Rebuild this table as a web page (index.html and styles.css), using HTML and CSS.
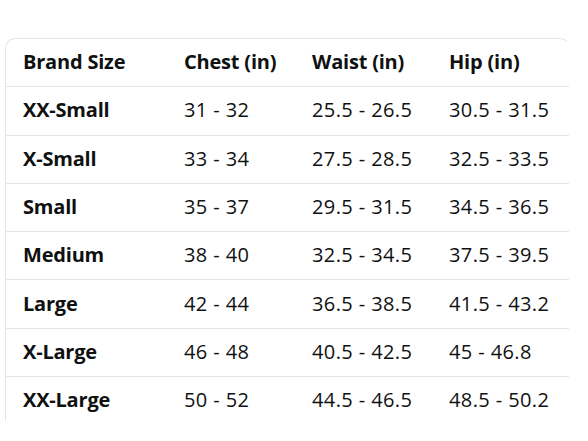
FILE: index.html
```html
<!DOCTYPE html>
<html>
<head>
<meta charset="utf-8">
<link rel="stylesheet" href="styles.css">
</head>
<body>
<div class="page">
  <div class="card">
    <table class="size-table">
      <colgroup>
        <col class="c1"><col class="c2"><col class="c3"><col class="c4">
      </colgroup>
      <thead>
        <tr><th>Brand Size</th><th>Chest (in)</th><th>Waist (in)</th><th>Hip (in)</th></tr>
      </thead>
      <tbody>
        <tr><th>XX-Small</th><td>31 - 32</td><td>25.5 - 26.5</td><td>30.5 - 31.5</td></tr>
        <tr><th>X-Small</th><td>33 - 34</td><td>27.5 - 28.5</td><td>32.5 - 33.5</td></tr>
        <tr><th>Small</th><td>35 - 37</td><td>29.5 - 31.5</td><td>34.5 - 36.5</td></tr>
        <tr><th>Medium</th><td>38 - 40</td><td>32.5 - 34.5</td><td>37.5 - 39.5</td></tr>
        <tr><th>Large</th><td>42 - 44</td><td>36.5 - 38.5</td><td>41.5 - 43.2</td></tr>
        <tr><th>X-Large</th><td>46 - 48</td><td>40.5 - 42.5</td><td>45 - 46.8</td></tr>
        <tr><th>XX-Large</th><td>50 - 52</td><td>44.5 - 46.5</td><td>48.5 - 50.2</td></tr>
      </tbody>
    </table>
  </div>
</div>
</body>
</html>
```

FILE: styles.css
```css
html, body {
  margin: 0;
  padding: 0;
  background: #ffffff;
}
.page {
  width: 588px;
  height: 441px;
  padding: 38px 0 0 5px;
  box-sizing: border-box;
  overflow: hidden;
}
.card {
  width: 565px;
  height: 383px;
  box-sizing: border-box;
  border-top: 1px solid #e3e6e6;
  border-left: 1px solid #e3e6e6;
  border-right: 1px solid transparent;
  border-radius: 10px 10px 0 0;
  overflow: hidden;
}
.size-table {
  border-collapse: collapse;
  table-layout: fixed;
  width: 563px;
  font-family: "Open Sans", "Liberation Sans", sans-serif;
  font-size: 20px;
  color: #0f1111;
}
.c1 { width: 161px; }
.c2 { width: 128px; }
.c3 { width: 137px; }
.c4 { width: 137px; }
.size-table th,
.size-table td {
  height: 45.3px;
  padding: 0 0 2px 17px;
  text-align: left;
  vertical-align: middle;
  white-space: nowrap;
  border-bottom: 1px solid #e3e6e6;
}
.size-table th {
  font-weight: 700;
  letter-spacing: -0.2px;
}
.size-table td {
  font-weight: 400;
  letter-spacing: 0.4px;
}
```
